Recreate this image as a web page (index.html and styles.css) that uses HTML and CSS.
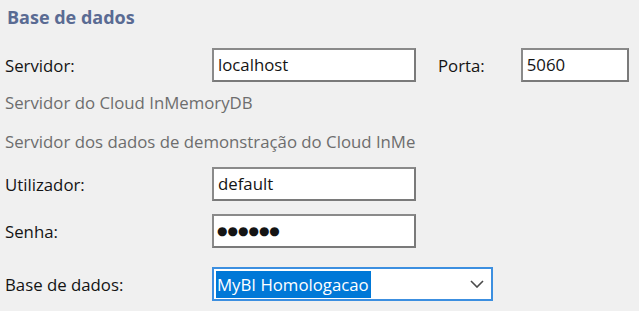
FILE: index.html
```html
<!DOCTYPE html>
<html lang="pt">
<head>
<meta charset="utf-8">
<title>Base de dados</title>
<link rel="stylesheet" href="styles.css">
</head>
<body>
<div class="panel">
  <div class="title">Base de dados</div>
  <div class="row row-server">
    <span class="label">Servidor:</span>
    <div class="input w-main">localhost</div>
    <span class="label porta">Porta:</span>
    <div class="input w-port">5060</div>
  </div>
  <div class="info info1">Servidor do Cloud InMemoryDB</div>
  <div class="info info2">Servidor dos dados de demonstração do Cloud InMe</div>
  <div class="row row-user">
    <span class="label">Utilizador:</span>
    <div class="input w-main">default</div>
  </div>
  <div class="row row-pass">
    <span class="label">Senha:</span>
    <div class="input w-main dots">&#9679;&#9679;&#9679;&#9679;&#9679;&#9679;</div>
  </div>
  <div class="row row-db">
    <span class="label">Base de dados:</span>
    <div class="combo">
      <span class="sel">MyBI Homologacao</span>
      <svg class="chev" width="14" height="8" viewBox="0 0 14 8"><path d="M1 1 L7 7 L13 1" fill="none" stroke="#4a4a4a" stroke-width="1.6"/></svg>
    </div>
  </div>
</div>
</body>
</html>
```
FILE: styles.css
```css
html, body {
  margin: 0;
  padding: 0;
  background: #f0f0f0;
}
body {
  width: 639px;
  height: 311px;
  overflow: hidden;
  font-family: "Open Sans", "Noto Sans", sans-serif;
  font-size: 16.8px;
  color: #141414;
}
.panel {
  display: flex;
  flex-direction: column;
  padding: 6px 0 0 5px;
}
.title {
  font-weight: bold;
  color: #5a6b93;
  font-size: 18px;
  line-height: 22px;
  padding-left: 2px;
}
.row {
  display: flex;
  align-items: center;
  height: 34px;
}
.row-server { margin-top: 20px; }
.row-user { margin-top: 15px; }
.row-pass { margin-top: 13px; }
.row-db { margin-top: 19px; }
.label {
  width: 207px;
  flex: none;
}
.label.porta {
  width: auto;
  margin-left: 22px;
  margin-right: 36px;
}
.input {
  box-sizing: border-box;
  height: 34px;
  background: #fff;
  border: 2px solid #7a7a7a;
  border-color: #8a8a8a #7a7a7a #7a7a7a #8a8a8a;
  padding: 0 0 0 4px;
  display: flex;
  align-items: center;
  line-height: 1;
}
.w-main { width: 204px; }
.w-port { width: 108px; }
.dots {
  font-size: 12px;
  letter-spacing: 0;
  padding-left: 3px;
  font-family: "DejaVu Sans", sans-serif;
}
.info {
  color: #6d6d6d;
  line-height: 20px;
}
.info1 { margin-top: 11px; }
.info2 { margin-top: 19px; }
.combo {
  box-sizing: border-box;
  width: 281px;
  height: 34px;
  background: #fff;
  border: 2px solid #3c8fe0;
  display: flex;
  align-items: center;
  justify-content: space-between;
  padding: 0 7px 0 2px;
}
.sel {
  background: #0078d7;
  color: #fff;
  line-height: 27px;
  padding: 0 2px 0 1px;
}
.chev { flex: none; }
```
